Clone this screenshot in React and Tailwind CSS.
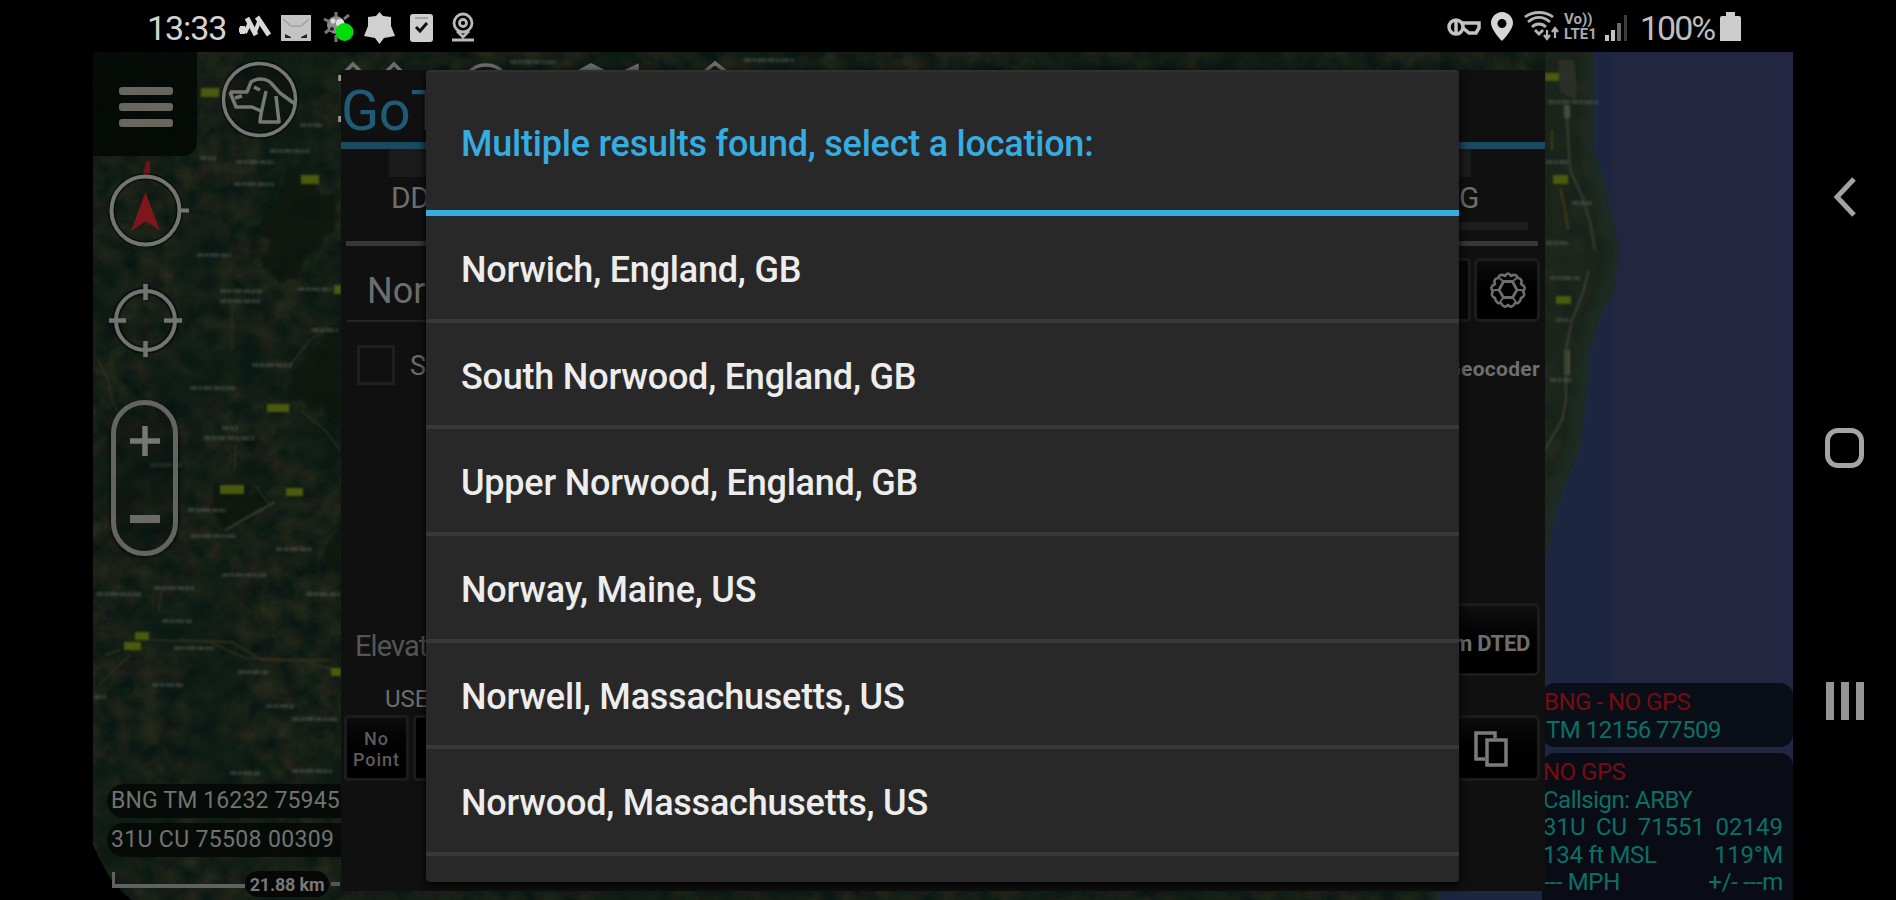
const RESULTS = [
  'Norwich, England, GB',
  'South Norwood, England, GB',
  'Upper Norwood, England, GB',
  'Norway, Maine, US',
  'Norwell, Massachusetts, US',
  'Norwood, Massachusetts, US',
]

// Yellow road markers: x, y, width, height
const ROADS = [
  [201, 88, 18, 9], [301, 175, 18, 9], [267, 404, 22, 8], [220, 485, 24, 9], [286, 488, 17, 8],
  [135, 632, 14, 8], [124, 642, 17, 8], [331, 668, 10, 8], [334, 285, 7, 9],
  [1545, 73, 14, 8], [1553, 175, 15, 9], [1556, 296, 15, 8],
]

// Town name smudges: x, y, width
const TOWNS = [
  [200, 158, 16], [300, 125, 24], [270, 151, 40], [236, 162, 38], [234, 184, 40], [197, 255, 34],
  [220, 291, 42], [220, 301, 40], [298, 289, 34], [312, 330, 26], [252, 365, 40], [190, 388, 46],
  [204, 438, 50], [222, 428, 16], [150, 465, 32], [188, 510, 38], [190, 536, 46], [276, 549, 36],
  [222, 575, 44], [154, 588, 40], [96, 594, 46], [306, 594, 34], [162, 621, 30], [174, 648, 40],
  [238, 672, 30], [152, 685, 32], [266, 706, 28], [292, 719, 46], [94, 697, 12], [230, 773, 30],
  [292, 771, 40], [510, 62, 46], [744, 60, 50], [1548, 102, 50], [1546, 162, 22], [1546, 243, 24],
  [1550, 278, 30], [1556, 320, 14], [1550, 380, 22], [1572, 203, 20],
]

function StatusBar() {
  return (
    <div className="h-[52px] shrink-0 bg-black flex items-start text-[#d2d2d2]">
      <div className="w-[90px] ml-[147px] mt-[8px] text-[34px] leading-[41px] tracking-[-1.1px] font-normal">13:33</div>
      <svg className="w-[34px] h-[24px] mt-[14px] ml-[1px]" viewBox="0 0 34 24">
        <path d="M1 16H8M4.500 12V20M9 4L18 21M19 3L31 21" fill="none" stroke="#d8d8d8" strokeWidth="5" />
        <path d="M7 19L12 8M17 18L21 8" fill="none" stroke="#d8d8d8" strokeWidth="4" />
      </svg>
      <svg className="w-[30px] h-[26px] mt-[15px] ml-[9px]" viewBox="0 0 30 26">
        <path d="M0 0H30V26H0Z" fill="#c4c4c4" />
        <path d="M2 4L10 11H20L28 4" fill="none" stroke="#a2a2a2" strokeWidth="1.500" />
        <path d="M4 19L10 22H20L26 19V23H4Z" fill="#222" />
        <path d="M10 19H20V26H10Z" fill="#c4c4c4" />
      </svg>
      <svg className="w-[32px] h-[32px] mt-[11px] ml-[11px]" viewBox="0 0 32 32">
        <circle cx="14" cy="14" r="9" fill="#8d8d8d" />
        <path d="M14 1V6M2 8L8 11M3 22L8 18M14 24V31M22 8L27 4" stroke="#777" strokeWidth="3" />
        <circle cx="11" cy="10" r="2.500" fill="#ddd" />
        <circle cx="18" cy="12" r="4" fill="#e2e2e2" />
        <circle cx="10" cy="18" r="2" fill="#222" />
        <circle cx="22.500" cy="21" r="9" fill="#00dd0a" />
      </svg>
      <svg className="w-[31px] h-[32px] mt-[12px] ml-[10px]" viewBox="0 0 31 32">
        <path d="M15.500 0L19 4L27 5V14L31 24L20 26L15.500 32L11 26L0 24L4 14V5L12 4Z" fill="#d0d0d0" />
      </svg>
      <svg className="w-[23px] h-[28px] mt-[14px] ml-[15px]" viewBox="0 0 23 28">
        <rect width="23" height="28" rx="3" fill="#cfcfcf" />
        <path d="M6 13L10 17L17 9" fill="none" stroke="#111" strokeWidth="3" />
        <path d="M5 4H18" stroke="#999" strokeWidth="1.500" />
      </svg>
      <svg className="w-[24px] h-[30px] mt-[12px] ml-[18px]" viewBox="0 0 24 30" fill="none" stroke="#b9b9b9" strokeWidth="2.800">
        <circle cx="12" cy="11" r="9" />
        <circle cx="12" cy="11" r="3.500" />
        <path d="M6 19L12 25L18 19M1 28H23" />
      </svg>

      <div className="ml-auto mr-[155px] flex items-start">
        <svg className="w-[34px] h-[22px] mt-[16px]" viewBox="0 0 34 22" fill="none" stroke="#c2c2c2" strokeWidth="3.500">
          <circle cx="9" cy="11" r="7" />
          <path d="M9 4V17M14 7H32V12L29 17H22L16 12" />
        </svg>
        <svg className="w-[22px] h-[29px] mt-[12px] ml-[10px]" viewBox="0 0 22 29">
          <path fillRule="evenodd" d="M11 0C5 0 0 5 0 11C0 18 11 29 11 29S22 18 22 11C22 5 17 0 11 0ZM11 7A4.500 4.500 0 1 1 11 16A4.500 4.500 0 0 1 11 7Z" fill="#d6d6d6" />
        </svg>
        <svg className="w-[36px] h-[30px] mt-[11px] ml-[11px]" viewBox="0 0 36 30" fill="none" stroke="#b4b4b4" strokeWidth="2.800">
          <path d="M1 6C9 0 21 0 29 6M4 11C11 5 19 5 26 11M8 16C12 12 18 12 22 16" />
          <path d="M11 19L15 23L19 19" />
          <path d="M23 19V27M20 24L23 28L26 24M31 27V18M28 21L31 17L34 21" strokeWidth="2.200" />
        </svg>
        <div className="w-[38px] mt-[12px] ml-[4px] text-[15px] leading-[15px] font-bold tracking-[0px] text-[#aaa]">
          Vo)) LTE1
        </div>
        <svg className="w-[24px] h-[26px] mt-[15px] ml-[3px]" viewBox="0 0 24 26">
          <path d="M0 20H4V26H0ZM6 15H10V26H6Z" fill="#c4c4c4" />
          <path d="M12 8H16V26H12Z" fill="#6b6b6b" />
          <path d="M19 0H22V26H19Z" fill="#3d3d3d" />
        </svg>
        <div className="w-[80px] ml-[11px] mt-[8px] text-[34px] leading-[41px] tracking-[-2px] whitespace-nowrap text-[#bebebe]">100%</div>
        <svg className="w-[21px] h-[29px] mt-[12px]" viewBox="0 0 21 29">
          <path d="M6 0H15V4H19Q21 4 21 6V29H0V6Q0 4 2 4H6Z" fill="#cdcdcd" />
        </svg>
      </div>
    </div>
  )
}

function MapCanvas() {
  return (
    <svg className="absolute inset-0 w-full h-full" viewBox="93 52 1700 848" preserveAspectRatio="none">
      <defs>
        <filter id="land" x="0" y="0" width="1" height="1" colorInterpolationFilters="sRGB">
          <feTurbulence type="fractalNoise" baseFrequency="0.05" numOctaves="4" seed="11" />
          <feColorMatrix values="0.18 0 0 0 -0.002  0.10 0.05 0 0 0.046  0.05 0 0 0 0.062  0 0 0 0 1" />
        </filter>
        <filter id="woods" x="0" y="0" width="1" height="1" colorInterpolationFilters="sRGB">
          <feTurbulence type="fractalNoise" baseFrequency="0.012" numOctaves="4" seed="4" />
          <feColorMatrix values="0 0 0 0 0.040  0 0 0 0 0.105  0 0 0 0 0.078  5 0 0 0 -2.500" />
        </filter>
        <filter id="soft"><feGaussianBlur stdDeviation="1.1" /></filter>
        <filter id="shore"><feGaussianBlur stdDeviation="4" /></filter>
        <linearGradient id="sea" x1="0" x2="1">
          <stop offset="0" stopColor="#1d2840" />
          <stop offset="0.5" stopColor="#20263f" />
          <stop offset="1" stopColor="#232642" />
        </linearGradient>
      </defs>
      <rect x="93" y="52" width="1700" height="848" filter="url(#land)" />
      <rect x="93" y="52" width="1700" height="848" filter="url(#woods)" opacity="0.55" />

      {/* woodland */}
      <g fill="#07130f" filter="url(#soft)" opacity="0.8">
        <path d="M290 165L300 182L312 178L322 196L335 195V232L322 236L318 250L306 252L300 275L280 282L274 270L262 268L272 240L258 232L268 215L262 205L280 200Z" />
        <path d="M341 322L326 330L320 345L306 350L302 366L292 378L288 402L302 398L310 410L322 408L330 420L341 430Z" />
        <path d="M215 482L228 492L240 490L250 498L262 492L268 505L256 512L250 525L238 520L225 528L212 510Z" />
        <path d="M341 530L325 548L322 565L341 570Z" />
      </g>
      {/* lanes and rivers */}
      <g fill="none" stroke="#33352a" strokeWidth="1.500" filter="url(#soft)" opacity="0.8">
        <path d="M97 358L108 380L112 400L122 418M232 305V350M290 365L310 340L325 330" />
        <path d="M150 640L210 642L245 658L300 660L341 672M98 685L130 655" />
        <path d="M300 410L325 430L340 450M235 445V470M255 485L270 505M162 590L158 612" />
        <path d="M225 530L275 502" stroke="#4a4a35" strokeWidth="2" />
        <path d="M105 655L120 650M180 640L232 642L262 660H330" stroke="#3b331a" strokeWidth="2" />
      </g>

      {/* coast */}
      <path d="M1545 52H1596V150L1605 190L1618 250L1612 290L1598 320L1588 350L1584 400L1578 450L1562 480L1548 540L1543 575Z" fill="#222a20" opacity="0.6" />
      <path d="M1593 40V150L1603 190L1618 250L1612 290L1597 320L1588 350L1584 400L1578 450L1563 480L1552 520L1545 560V880L1440 888V920H1810V40Z" fill="none" stroke="#1b2b20" strokeWidth="18" filter="url(#shore)" />
      <path d="M1594 40V150L1606 190L1619 250L1614 290L1599 320L1590 350L1586 400L1580 450L1566 480L1554 520L1546 560V880L1440 889V920H1810V40Z" fill="url(#sea)" filter="url(#soft)" />
      <path d="M1558 60H1574L1577 88L1575 100L1560 92Z" fill="#35382f" opacity="0.6" filter="url(#soft)" />
      <g fill="none" filter="url(#soft)" opacity="0.8">
        <path d="M1567 105V118M1567 350V375" stroke="#55573f" strokeWidth="6" />
        <path d="M1567 118L1570 170L1582 196L1590 222L1595 250M1589 270L1582 295L1572 320L1566 350V400L1562 420L1545 450" stroke="#3d4034" strokeWidth="2.500" />
        <path d="M1552 130V150M1560 188L1565 210L1568 230" stroke="#4d4012" strokeWidth="2" />
      </g>

      <g stroke="#62645f" strokeWidth="4" strokeDasharray="7 1 4 1 9 1.500" opacity="0.42" filter="url(#soft)">
        {TOWNS.map(([x, y, w]) => <path key={`${x}-${y}`} d={`M${x} ${y}l${w} 0.200`} />)}
      </g>
      <g fill="#4c5a0b" filter="url(#soft)">
        {ROADS.map(([x, y, w, h]) => <rect key={`${x}-${y}`} x={x} y={y} width={w} height={h} />)}
      </g>

      {/* tool icons poking out above the dialog */}
      <g fill="none" stroke="#6d6d6b" strokeWidth="3.500">
        <path d="M345 72L353 64L361 72M386 72L394 64L402 72M468 74C476 62 496 62 504 74M702 74L715 63L729 74" />
        <path d="M578 72L591 65L605 72ZM624 72L637 66V72Z" fill="#6d6d6b" />
        <path d="M340 75V81M340 116V122" stroke="#999" />
      </g>
      <path d="M93 845L99 858L110 878L123 893L132 900H93Z" fill="#000" />
    </svg>
  )
}

function MapTools() {
  return (
    <div className="relative w-[248px] h-full flex flex-col overflow-hidden">
      <div className="flex">
        <div className="w-[104px] h-[104px] rounded-br-[14px] bg-[#040805]/85 flex flex-col items-center justify-center gap-[8px] pt-[5px] pl-[2px]">
          <div className="w-[54px] h-[8px] rounded-[3px] bg-[#67675e]" />
          <div className="w-[54px] h-[8px] rounded-[3px] bg-[#67675e]" />
          <div className="w-[54px] h-[8px] rounded-[3px] bg-[#67675e]" />
        </div>
        <svg className="w-[80px] h-[80px] mt-[8px] ml-[23px]" viewBox="0 0 80 80" fill="none" stroke="#777775" strokeWidth="3.500" strokeLinejoin="round">
          <circle cx="39.500" cy="39.500" r="36" stroke="#050505" strokeWidth="7" opacity="0.5" />
          <circle cx="39.500" cy="39.500" r="36" fill="#0b100d" fillOpacity="0.45" />
          <path d="M10 32H27L31 22C37 18 46 18 51 23L60 33L75 44" />
          <path d="M10 32L16 47H32L41 51M15 38L22 36M46 31C44 42 41 50 40 62H59L56 36" />
          <path d="M34 27L40 30" />
        </svg>
      </div>

      <svg className="w-[84px] h-[88px] mt-[3px] ml-[16px]" viewBox="0 0 84 88">
        <path d="M37 3L41 1V20H33Z" fill="#701317" />
        <circle cx="36.500" cy="51.500" r="34" fill="none" stroke="#050806" strokeWidth="7" opacity="0.6" />
        <circle cx="36.500" cy="51.500" r="34" fill="none" stroke="#747472" strokeWidth="4" />
        <path d="M71 51.500H80" stroke="#747472" strokeWidth="4" />
        <path d="M36.500 33L51 72L37 62L22 72Z" fill="#80151b" />
      </svg>
      <svg className="w-[76px] h-[76px] mt-[36px] ml-[14px]" viewBox="0 0 76 76" fill="none">
        <circle cx="38.500" cy="37.500" r="29.500" stroke="#050806" strokeWidth="8" opacity="0.6" />
        <circle cx="38.500" cy="37.500" r="29.500" stroke="#737371" strokeWidth="4" />
        <path d="M38.500 1V17M38.500 58V74M2 37.500H19M57 37.500H75" stroke="#737371" strokeWidth="4.500" />
      </svg>
      <div className="w-[67px] h-[156px] mt-[41px] ml-[18px] rounded-full border-[5px] border-[#646562] bg-[#0c120e]/35 flex flex-col items-center justify-between pt-[21px] pb-[28px] shadow-[0_1px_4px_#000]">
        <svg className="w-[30px] h-[30px]" viewBox="0 0 30 30">
          <path d="M15 0V30M0 15H30" stroke="#777775" strokeWidth="5.500" />
        </svg>
        <div className="w-[30px] h-[8px] bg-[#6b6b69]" />
      </div>

      <div className="mt-auto ml-[14px] flex flex-col gap-[5px] text-[23px] leading-[34px] text-[#717371] whitespace-nowrap">
        <div className="h-[34px] w-[250px] rounded-l-full bg-[#050806]/85 pl-[4px] tracking-[0.15px]">BNG TM 16232 75945</div>
        <div className="h-[34px] w-[250px] rounded-l-full bg-[#050806]/85 pl-[4px] tracking-[0.35px]">31U CU 75508 00309</div>
      </div>
      <div className="h-[43px] flex items-center pl-[19px] pt-[11px]">
        <div className="w-[133px] h-[16px] mb-[8px] border-l-[3px] border-b-[4px] border-[#60625f]" />
        <div className="w-[84px] h-[26px] rounded-full bg-[#060706] text-center text-[18px] leading-[28px] font-bold tracking-[-0.2px] text-[#777]">21.88 km</div>
        <div className="w-[9px] h-[4px] ml-[2px] bg-[#555]" />
      </div>
    </div>
  )
}

function GoToDialog() {
  return (
    <div className="absolute left-[248px] top-[18px] w-[1204px] h-[821px] bg-[#101010] flex flex-col text-[#6e6e6e] overflow-hidden">
      <div className="h-[79px] border-b-[7px] border-[#1b4a60] pt-[13px] text-[56px] leading-none tracking-[-0.3px] text-[#1f5a76]">GoTo</div>
      <div className="h-[28px] ml-[48px] mr-[74px] bg-[#1b1b1b]" />
      <div className="h-[60px] flex justify-between pl-[50px] pr-[66px] pt-[4px] text-[30px] leading-[34px] tracking-[-0.5px]">
        <span>DD</span>
        <span>BNG</span>
      </div>
      <div className="h-[8px] -mt-[15px] ml-[100px] mr-[17px] bg-[#1e1e1e]" />
      <div className="h-[5px] mt-[11px] ml-[5px] mr-[7px] bg-[#373737]" />

      <div className="flex h-[64px] mt-[12px] pl-[6px] pr-[5px]">
        <div className="flex-1 border-b-2 border-[#242424] pl-[20px] text-[36px] leading-[66px]">Nor</div>
        <div className="w-[80px] mr-[3px] rounded-[4px] border-[3px] border-[#1c1c1c] bg-[#070707]" />
        <div className="w-[66px] rounded-[6px] border-[3px] border-[#1c1c1c] bg-linear-to-b from-[#0d0d0d] to-black flex items-center justify-center pl-[2px]">
          <svg className="w-[38px] h-[38px]" viewBox="0 0 38 38" fill="none" stroke="#6e6e6e">
            <path d="M16 5Q19 0 22 5Q27 2 29 7Q34 8 32 13Q38 16 34 20Q37 25 32 27Q31 33 26 32Q23 38 19 34Q15 38 12 32Q7 33 6 27Q1 25 4 20Q0 16 6 13Q4 8 9 7Q11 2 16 5Z" strokeWidth="2.600" strokeLinejoin="round" />
            <path d="M14.500 10.500H23.500L28 19L23.500 26.500H14.500L10 19Z" strokeWidth="2.800" />
            <path d="M14 10L10 7M24 10L28 7M28 19H33M10 19H5M24 27L27 31M14 27L11 31" strokeWidth="2" />
          </svg>
        </div>
      </div>

      <div className="flex h-[40px] mt-[23px] pl-[16px] pr-[5px]">
        <div className="w-[38px] h-[40px] border-[3px] border-[#1f1f1f]" />
        <div className="ml-[15px] text-[27px] leading-[43px]">S</div>
        <div className="ml-auto text-[21px] leading-[48px] font-bold tracking-[0.3px]">Geocoder</div>
      </div>

      <div className="flex justify-between h-[73px] mt-[218px] pl-[14px] pr-[5px]">
        <div className="text-[29px] leading-[86px] tracking-[-0.9px] text-[#555]">Elevation</div>
        <div className="w-[220px] rounded-[6px] border-[3px] border-[#1c1c1c] bg-linear-to-b from-[#101010] to-black pr-[7px] text-right text-[22px] leading-[75px] font-bold tracking-[-0.3px]">Pull from DTED</div>
      </div>
      <div className="h-[39px] pl-[44px] pt-[7px] text-[24px] leading-[33px]">USE</div>
      <div className="flex gap-[4px] h-[66px] pl-[3px] pr-[5px]">
        <div className="w-[65px] rounded-[4px] border-[3px] border-[#1c1c1c] bg-linear-to-b from-[#0d0d0d] to-black pt-[10px] text-center text-[18px] leading-[21px] font-medium tracking-[1px] text-[#5c5c5c]">No<br />Point</div>
        <div className="w-[65px] rounded-[4px] border-[3px] border-[#1c1c1c] bg-black" />
        <div className="ml-auto w-[104px] rounded-[6px] border-[3px] border-[#1c1c1c] bg-linear-to-b from-[#0d0d0d] to-black pl-[35px] pt-[13px]">
          <svg className="w-[34px] h-[36px]" viewBox="0 0 34 36" fill="none" stroke="#7b7b7b" strokeWidth="3.500">
            <path d="M11 28H2V2H21V7" />
            <rect x="13" y="9" width="19" height="25" />
          </svg>
        </div>
      </div>
    </div>
  )
}

function Hud() {
  return (
    <div className="absolute left-[1449px] bottom-0 w-[251px] h-[217px] flex flex-col gap-[6px] text-[24px] leading-[27.5px] text-[#0b6f66] whitespace-nowrap">
      <div className="h-[64px] rounded-[13px] bg-[#0a0e17] pt-[6px] pl-[2px]">
        <div className="text-[#760b12] tracking-[-0.5px]">BNG - NO GPS</div>
        <div className="tracking-[-0.5px] pl-[2px]">TM 12156 77509</div>
      </div>
      <div className="h-[147px] rounded-t-[13px] bg-[#0a0c15] pt-[6px] pl-[1px] pr-[10px]">
        <div className="text-[#760b12] tracking-[-0.5px]">NO GPS</div>
        <div className="tracking-[-0.5px]">Callsign: ARBY</div>
        <div className="flex justify-between"><span>31U</span><span>CU</span><span>71551</span><span>02149</span></div>
        <div className="flex justify-between tracking-[-0.3px]"><span>134 ft MSL</span><span>119°M</span></div>
        <div className="flex justify-between tracking-[-0.3px]"><span>--- MPH</span><span>+/- ---m</span></div>
      </div>
    </div>
  )
}

function LocationPicker() {
  return (
    <div className="absolute left-[333px] top-[18px] w-[1033px] h-[812px] rounded-[4px] bg-[#282828] border-t-2 border-[#303030] shadow-[0_3px_10px_#000] overflow-hidden flex flex-col">
      <h1 className="h-[144px] shrink-0 pl-[35px] pt-[46px] border-b-[6px] border-[#37ace0] text-[36px] leading-[52px] font-medium tracking-[-0.23px] text-[#37ace0]">
        Multiple results found, select a location:
      </h1>
      <ul>
        {RESULTS.map(name => (
          <li key={name} className="h-[106.700px] border-b-[4px] border-[#383838] pl-[35px] text-[36px] leading-[109px] font-medium tracking-[-0.22px] text-[#ededed]">
            {name}
          </li>
        ))}
      </ul>
    </div>
  )
}

function NavRail() {
  return (
    <div className="w-[103px] shrink-0 bg-black flex flex-col items-center">
      <svg className="w-[24px] h-[40px] mt-[125px]" viewBox="0 0 24 40">
        <path d="M21 2L4 20L21 38" fill="none" stroke="#a2a2a2" strokeWidth="5" />
      </svg>
      <div className="w-[39px] h-[40px] mt-[211px] rounded-[13px] border-[5px] border-[#a5a5a5]" />
      <div className="flex gap-[7px] mt-[214px]">
        <div className="w-[8px] h-[38px] bg-[#959595]" />
        <div className="w-[8px] h-[38px] bg-[#959595]" />
        <div className="w-[8px] h-[38px] bg-[#959595]" />
      </div>
    </div>
  )
}

export default function App() {
  return (
    <div className="w-[1896px] h-[900px] bg-black flex flex-col overflow-hidden font-['Roboto',sans-serif]">
      <StatusBar />
      <div className="flex flex-1 min-h-0 pl-[93px]">
        <div className="relative w-[1700px] h-full overflow-hidden">
          <MapCanvas />
          <MapTools />
          <Hud />
          <GoToDialog />
          <LocationPicker />
        </div>
        <NavRail />
      </div>
    </div>
  )
}
